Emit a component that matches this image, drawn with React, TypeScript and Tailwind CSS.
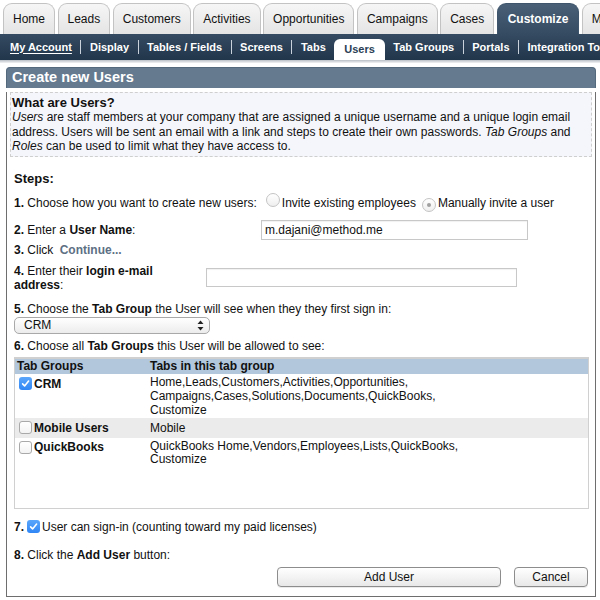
import React from "react";

const FONT = "font-['Liberation_Sans',Arial,Helvetica,sans-serif]";

function Radio({ checked }: { checked?: boolean }) {
  return (
    <span className="inline-flex w-[14px] h-[14px] shrink-0 rounded-full border border-[#c4c4c4] bg-gradient-to-b from-white to-[#efefef] items-center justify-center">
      {checked && <span className="w-[4px] h-[4px] rounded-full bg-[#a0a0a0]" />}
    </span>
  );
}

function Check({ checked }: { checked?: boolean }) {
  if (checked)
    return (
      <span className="inline-flex w-[13px] h-[13px] shrink-0 rounded-[3px] bg-gradient-to-b from-[#5aa6fb] to-[#2f86f5] items-center justify-center">
        <svg width="9" height="9" viewBox="0 0 9 9">
          <path d="M1.6 4.9 L3.6 6.9 L7.6 2.1" stroke="white" strokeWidth="1.6" fill="none" strokeLinecap="round" strokeLinejoin="round" />
        </svg>
      </span>
    );
  return <span className="inline-block w-[13px] h-[13px] shrink-0 rounded-[3px] border border-[#a9a9a9] bg-gradient-to-b from-white to-[#f3f3f3]" />;
}

const tabs = ["Home", "Leads", "Customers", "Activities", "Opportunities", "Campaigns", "Cases"];

function Sep() {
  return <div className="w-px h-[14px] self-center bg-[#c9d1da] shrink-0" />;
}

function NavItem({ children, underline }: { children: React.ReactNode; underline?: boolean }) {
  return (
    <div className={`h-full flex items-center px-[8.5px] shrink-0 ${underline ? "underline underline-offset-2" : ""}`}>{children}</div>
  );
}

export default function App() {
  return (
    <div className={`${FONT} w-[600px] h-[600px] bg-white text-[#111] overflow-hidden`}>
      {/* Top tabs */}
      <div className="flex h-[34px] items-end pl-[3px] overflow-hidden whitespace-nowrap">
        {tabs.map((t) => (
          <div
            key={t}
            className="shrink-0 mr-[2.5px] h-[31px] px-[9px] rounded-t-[9px] border border-b-0 border-[#c3c3c3] bg-gradient-to-b from-[#f6f6f6] to-[#e4e4e4] text-[12px] text-[#111] flex items-center"
          >
            {t}
          </div>
        ))}
        <div className="shrink-0 mr-[2.5px] h-[31px] px-[10px] rounded-t-[9px] border border-b-0 border-[#3f556b] bg-gradient-to-b from-[#4a6077] to-[#354b61] text-[12px] font-bold text-white flex items-center">
          Customize
        </div>
        <div className="shrink-0 h-[31px] px-[9px] rounded-t-[9px] border border-b-0 border-[#c3c3c3] bg-gradient-to-b from-[#f6f6f6] to-[#e4e4e4] text-[12px] text-[#111] flex items-center">
          My Info
        </div>
      </div>

      {/* Sub nav */}
      <div className="flex h-[26px] items-end bg-gradient-to-b from-[#354b61] to-[#21364b] pl-[1.5px] whitespace-nowrap overflow-hidden text-[11px] font-bold text-white">
        <NavItem underline>My Account</NavItem>
        <Sep />
        <NavItem>Display</NavItem>
        <Sep />
        <NavItem>Tables / Fields</NavItem>
        <Sep />
        <NavItem>Screens</NavItem>
        <Sep />
        <NavItem>Tabs</NavItem>
        <div className="h-[21px] flex items-center px-[10px] bg-white text-[#2a3f55] rounded-t-[6px] shrink-0">Users</div>
        <NavItem>Tab Groups</NavItem>
        <Sep />
        <NavItem>Portals</NavItem>
        <Sep />
        <NavItem>Integration Tools</NavItem>
      </div>
      <div className="h-[3px] bg-gradient-to-b from-[#b8bec5] to-[#f3f3f3]" />

      {/* Panel */}
      <div className="ml-[6px] w-[590px] mt-[4px]">
        <div className="h-[21px] bg-[#657a8f] rounded-t-[4px] border border-b-0 border-[#55697d] text-white font-bold text-[14.5px] pl-[5px] flex items-center">
          Create new Users
        </div>
        <div className="border-x border-b border-[#6e6e6e] pb-[9px]">
          {/* Info box */}
          <div className="mx-[3px] mt-[4px] border border-dashed border-[#cfcfcf] bg-[#f5f6fb] pl-[1px] pt-[2px] pb-[2px]">
            <div className="text-[13px] font-bold leading-[15px]">What are Users?</div>
            <div className="text-[12px] leading-[14.5px]">
              <i>Users</i> are staff members at your company that are assigned a unique username and a unique login email address. Users will be sent an email with a link and steps to create their own passwords. <i>Tab Groups</i> and <i>Roles</i> can be used to limit what they have access to.
            </div>
          </div>

          <div className="pl-[7px] pr-[6px] text-[12px]">
            <div className="mt-[14px] text-[13px] font-bold leading-[16px]">Steps:</div>

            {/* Step 1 */}
            <div className="mt-[6px] h-[20px] flex items-center whitespace-nowrap">
              <span>
                <b>1.</b> Choose how you want to create new users:
              </span>
              <span className="ml-[9px]">
                <Radio />
              </span>
              <span className="ml-[2px]">Invite existing employees</span>
              <span className="ml-[6px]">
                <Radio checked />
              </span>
              <span className="ml-[2px]">Manually invite a user</span>
            </div>

            {/* Step 2 */}
            <div className="mt-[7px] h-[20px] flex items-center">
              <div className="w-[247px] shrink-0">
                <b>2.</b> Enter a <b>User Name</b>:
              </div>
              <div className="w-[267px] h-[20px] border border-[#c8c8c8] flex items-center pl-[3px] shadow-[inset_0_1px_1px_rgba(0,0,0,0.06)]">
                m.dajani@method.me
              </div>
            </div>

            {/* Step 3 */}
            <div className="mt-[3px] leading-[14px]">
              <b>3.</b> Click <b className="ml-[3px] text-[#5d7084]">Continue...</b>
            </div>

            {/* Step 4 */}
            <div className="mt-[7px] flex items-start">
              <div className="w-[192px] shrink-0 leading-[14px]">
                <div className="w-[150px]">
                  <b>4.</b> Enter their <b>login e-mail address</b>:
                </div>
              </div>
              <div className="mt-[4px] w-[311px] h-[19px] border border-[#c8c8c8] shadow-[inset_0_1px_1px_rgba(0,0,0,0.06)]" />
            </div>

            {/* Step 5 */}
            <div className="mt-[10px] leading-[14px]">
              <b>5.</b> Choose the <b>Tab Group</b> the User will see when they they first sign in:
            </div>
            <div className="mt-[1px] w-[196px] h-[17px] rounded-[5px] border border-[#a9a9a9] bg-gradient-to-b from-white to-[#ececec] flex items-center justify-between pl-[9px] pr-[5px]">
              <span>CRM</span>
              <svg width="7" height="11" viewBox="0 0 7 11">
                <path d="M3.5 0.5 L6.5 4 L0.5 4 Z" fill="#222" />
                <path d="M3.5 10.5 L6.5 7 L0.5 7 Z" fill="#222" />
              </svg>
            </div>

            {/* Step 6 */}
            <div className="mt-[5px] leading-[14px]">
              <b>6.</b> Choose all <b>Tab Groups</b> this User will be allowed to see:
            </div>
            <div className="mt-[4px] h-[152px] border border-t-2 border-[#d0d0d0] overflow-hidden">
              <div className="flex h-[15px] items-center bg-[#b3c7dc] font-bold">
                <div className="w-[135px] pl-[2px]">Tab Groups</div>
                <div>Tabs in this tab group</div>
              </div>
              <div className="flex pt-[1px] pb-[1px] leading-[14px]">
                <div className="w-[135px] pl-[4px] pt-[2px] flex items-center gap-[2px] self-start">
                  <Check checked />
                  <b>CRM</b>
                </div>
                <div className="flex-1">
                  Home,Leads,Customers,Activities,Opportunities,
                  <br />
                  Campaigns,Cases,Solutions,Documents,QuickBooks,
                  <br />
                  Customize
                </div>
              </div>
              <div className="flex h-[20px] items-center bg-[#ebebeb]">
                <div className="w-[135px] pl-[4px] flex items-center gap-[2px]">
                  <Check />
                  <b>Mobile Users</b>
                </div>
                <div>Mobile</div>
              </div>
              <div className="flex pt-[2px] leading-[13px]">
                <div className="w-[135px] pl-[4px] pt-[1px] flex items-center gap-[2px] self-start">
                  <Check />
                  <b>QuickBooks</b>
                </div>
                <div className="flex-1">
                  QuickBooks Home,Vendors,Employees,Lists,QuickBooks,
                  <br />
                  Customize
                </div>
              </div>
            </div>

            {/* Step 7 */}
            <div className="mt-[11px] h-[14px] flex items-center">
              <b>7.</b>
              <span className="ml-[3px]">
                <Check checked />
              </span>
              <span className="ml-[2px]">User can sign-in (counting toward my paid licenses)</span>
            </div>

            {/* Step 8 */}
            <div className="mt-[14px] leading-[14px]">
              <b>8.</b> Click the <b>Add User</b> button:
            </div>
            <div className="mt-[5px] flex justify-end gap-[13px] pr-[1px]">
              <div className="w-[224px] h-[20px] rounded-[4px] border border-[#8d8d8d] bg-gradient-to-b from-white to-[#e8e8e8] flex items-center justify-center shadow-[0_1px_0_rgba(0,0,0,0.08)]">
                Add User
              </div>
              <div className="w-[74px] h-[20px] rounded-[4px] border border-[#8d8d8d] bg-gradient-to-b from-white to-[#e8e8e8] flex items-center justify-center shadow-[0_1px_0_rgba(0,0,0,0.08)]">
                Cancel
              </div>
            </div>
          </div>
        </div>
      </div>
    </div>
  );
}
